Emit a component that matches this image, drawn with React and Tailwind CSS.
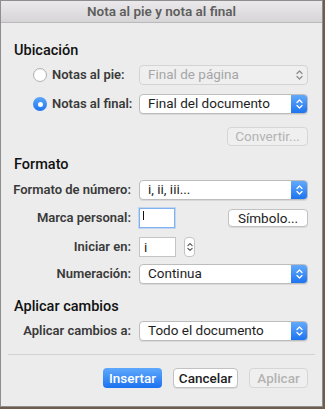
import React from 'react';

const font = { fontFamily: 'Roboto, "Noto Sans", sans-serif' };

const Chevrons = ({ color = '#ffffff', w = 7 }) => (
  <svg width={w} height="12" viewBox="0 0 7 12" fill="none">
    <path d="M1 4.5 L3.5 2 L6 4.5" stroke={color} strokeWidth="1.3" strokeLinecap="round" strokeLinejoin="round" />
    <path d="M1 7.5 L3.5 10 L6 7.5" stroke={color} strokeWidth="1.3" strokeLinecap="round" strokeLinejoin="round" />
  </svg>
);

const Select = ({ value, disabled }) => (
  <div
    className={
      'flex h-[20px] w-[169px] items-stretch overflow-hidden rounded-[4px] border text-[13.5px] ' +
      (disabled
        ? 'border-[#d4d4d4] bg-[#efefef] text-[#a6a6a6]'
        : 'border-[#bdbdbd] bg-white text-[#1e1e1e] shadow-[0_1px_0_rgba(0,0,0,0.08)]')
    }
  >
    <div className="flex flex-1 items-center pl-[8px] leading-none">{value}</div>
    {disabled ? (
      <div className="flex w-[16px] items-center justify-center">
        <Chevrons color="#8c8c8c" />
      </div>
    ) : (
      <div className="flex w-[16px] items-center justify-center bg-gradient-to-b from-[#62a9fc] to-[#1b74f0]">
        <Chevrons />
      </div>
    )}
  </div>
);

const Label = ({ children }) => (
  <div className="w-[138px] shrink-0 pr-[8px] text-right text-[13px] font-semibold text-[#3a3a3a]">{children}</div>
);

const Row = ({ label, children, className = '' }) => (
  <div className={'flex h-[20px] items-center ' + className}>
    <Label>{label}</Label>
    {children}
  </div>
);

const Radio = ({ checked }) =>
  checked ? (
    <div className="flex h-[14px] w-[14px] shrink-0 items-center justify-center rounded-full bg-gradient-to-b from-[#5ba6fb] to-[#1c74ef]">
      <div className="h-[5px] w-[5px] rounded-full bg-white" />
    </div>
  ) : (
    <div className="h-[14px] w-[14px] shrink-0 rounded-full border border-[#b0b0b0] bg-white shadow-[inset_0_1px_1px_rgba(0,0,0,0.05)]" />
  );

const RadioRow = ({ checked, label, value, disabled, className = '' }) => (
  <div className={'flex h-[20px] items-center ' + className}>
    <div className="flex w-[138px] shrink-0 items-center pl-[32px]">
      <Radio checked={checked} />
      <span className="ml-[5px] text-[13px] font-semibold text-[#3a3a3a]">{label}</span>
    </div>
    <Select value={value} disabled={disabled} />
  </div>
);

const Heading = ({ children, className = '' }) => (
  <div className={'h-[20px] pl-[13px] text-[14.5px] font-medium leading-[20px] text-[#111] ' + className}>{children}</div>
);

export default function App() {
  return (
    <div className="h-[409px] w-[325px] bg-[#6e5c4c]" style={font}>
      <div className="flex h-[407px] w-[323px] flex-col border border-[#8e8e8e] bg-[#ececec]">
        {/* title bar */}
        <div className="flex h-[22px] shrink-0 items-center justify-center border-b border-[#b9b9b9] bg-gradient-to-b from-[#ebe9eb] to-[#d6d4d6] text-[13.5px] font-semibold text-[#5e5e5e]">
          Nota al pie y nota al final
        </div>

        <Heading className="mt-[18px]">Ubicación</Heading>
        <RadioRow className="mt-[4px]" label="Notas al pie:" value="Final de página" disabled />
        <RadioRow className="mt-[9px]" checked label="Notas al final:" value="Final del documento" />
        <div className="mt-[13px] flex justify-end pr-[14px]">
          <div className="flex h-[19px] w-[81px] items-center justify-center rounded-[4px] border border-[#d6d6d6] bg-[#efefef] text-[13.5px] text-[#b3b3b3]">
            Convertir...
          </div>
        </div>

        <Heading className="mt-[9px]">Formato</Heading>
        <Row className="mt-[5px]" label="Formato de número:">
          <Select value="i, ii, iii..." />
        </Row>
        <Row className="mt-[8px]" label="Marca personal:">
          <div className="relative h-[20px] w-[36px] border border-[#7fb2f2] bg-white shadow-[0_0_0_1px_rgba(120,170,240,0.35)]">
            <div className="absolute left-[3px] top-[2px] h-[9px] w-px bg-[#111]" />
          </div>
          <div className="ml-[53px] flex h-[18px] w-[80px] items-center justify-center rounded-[4px] border border-[#c2c2c2] bg-white text-[13.5px] text-[#222] shadow-[0_1px_0_rgba(0,0,0,0.08)]">
            Símbolo...
          </div>
        </Row>
        <Row className="mt-[9px]" label="Iniciar en:">
          <div className="flex h-[20px] w-[37px] items-center border border-[#c4c4c4] bg-white pl-[4px] text-[13.5px] text-[#222]">
            i
          </div>
          <div className="ml-[8px] flex h-[20px] w-[11px] items-center justify-center rounded-[4px] border border-[#c4c4c4] bg-white">
            <Chevrons color="#555" w={6} />
          </div>
        </Row>
        <Row className="mt-[7px]" label="Numeración:">
          <Select value="Continua" />
        </Row>

        <Heading className="mt-[13px]">Aplicar cambios</Heading>
        <Row className="mt-[4px]" label="Aplicar cambios a:">
          <Select value="Todo el documento" />
        </Row>

        <div className="mx-[7px] mt-[13px] h-px bg-[#d2d2d2]" />

        <div className="mt-[13px] flex justify-end gap-[11px] pr-[14px]">
          <div className="flex h-[20px] w-[59px] items-center justify-center rounded-[4px] bg-gradient-to-b from-[#5ea8fc] to-[#1a72ef] text-[13.5px] font-medium text-white">
            Insertar
          </div>
          <div className="flex h-[20px] w-[65px] items-center justify-center rounded-[4px] border border-[#c2c2c2] bg-white text-[13.5px] font-medium text-[#222] shadow-[0_1px_0_rgba(0,0,0,0.08)]">
            Cancelar
          </div>
          <div className="flex h-[20px] w-[59px] items-center justify-center rounded-[4px] border border-[#d6d6d6] bg-[#efefef] text-[13.5px] font-medium text-[#b3b3b3]">
            Aplicar
          </div>
        </div>
      </div>
    </div>
  );
}
